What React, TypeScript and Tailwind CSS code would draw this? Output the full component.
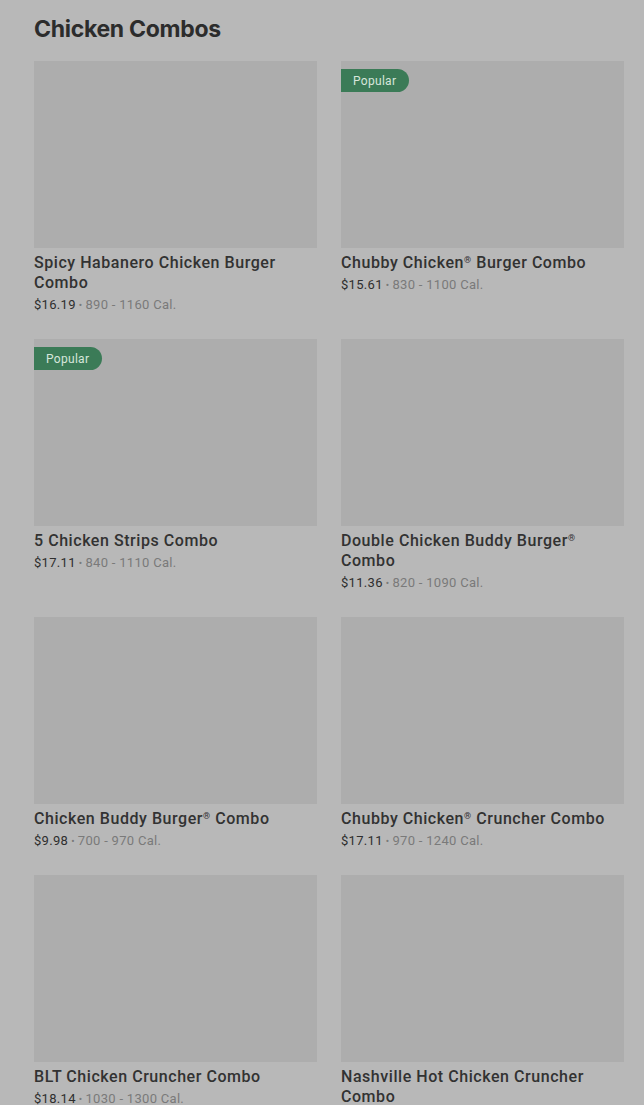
import React from "react";

type Item = {
  name: string;
  reg?: [string, string];
  price: string;
  cal: string;
  popular?: boolean;
};

const items: Item[] = [
  { name: "Spicy Habanero Chicken Burger Combo", price: "$16.19", cal: "890 - 1160 Cal." },
  { name: "", reg: ["Chubby Chicken", " Burger Combo"], price: "$15.61", cal: "830 - 1100 Cal.", popular: true },
  { name: "5 Chicken Strips Combo", price: "$17.11", cal: "840 - 1110 Cal.", popular: true },
  { name: "", reg: ["Double Chicken Buddy Burger", " Combo"], price: "$11.36", cal: "820 - 1090 Cal." },
  { name: "", reg: ["Chicken Buddy Burger", " Combo"], price: "$9.98", cal: "700 - 970 Cal." },
  { name: "", reg: ["Chubby Chicken", " Cruncher Combo"], price: "$17.11", cal: "970 - 1240 Cal." },
  { name: "BLT Chicken Cruncher Combo", price: "$18.14", cal: "1030 - 1300 Cal." },
  { name: "Nashville Hot Chicken Cruncher Combo", price: "$18.95", cal: "1020 - 1290 Cal." },
];

function Card({ item }: { item: Item }) {
  return (
    <div className="flex flex-col">
      <div className="relative h-[187px] bg-[#adadad]">
        {item.popular && (
          <span className="absolute left-0 top-[8px] h-[23px] pl-[12px] pr-[13px] flex items-center rounded-r-full bg-[#3b7b57] text-[12px] text-[#d6e6db] leading-none tracking-[0.3px]">
            Popular
          </span>
        )}
      </div>
      <div className="mt-[5px] text-[16px] leading-[20px] font-medium text-[#323232] tracking-[0.55px]">
        {item.reg ? (
          <>
            {item.reg[0]}
            <span className="relative -top-[5px] text-[9px] leading-none">®</span>
            {item.reg[1]}
          </>
        ) : (
          item.name
        )}
      </div>
      <div className="mt-[3px] text-[13px] leading-[18px] text-[#7a7a7a] tracking-[0.3px]">
        <span className="text-[#2e2e2e]">{item.price}</span>
        <span className="text-[10px] mx-[3px]">•</span>
        {item.cal}
      </div>
    </div>
  );
}

export default function App() {
  return (
    <main
      className="w-full h-[1105px] overflow-hidden bg-[#b8b8b8] pl-[34px] pr-[20px] pt-[14px]"
      style={{ fontFamily: "Roboto, 'Noto Sans', sans-serif" }}
    >
      <h2
        className="text-[23px] leading-[30px] font-bold text-[#2c2c2c] tracking-[-0.3px]"
        style={{ fontFamily: "Inter, sans-serif" }}
      >
        Chicken Combos
      </h2>
      <div className="mt-[17px] grid grid-cols-2 gap-x-[24px] gap-y-[24px]">
        {items.map((item) => (
          <Card key={item.price + item.cal} item={item} />
        ))}
      </div>
    </main>
  );
}
